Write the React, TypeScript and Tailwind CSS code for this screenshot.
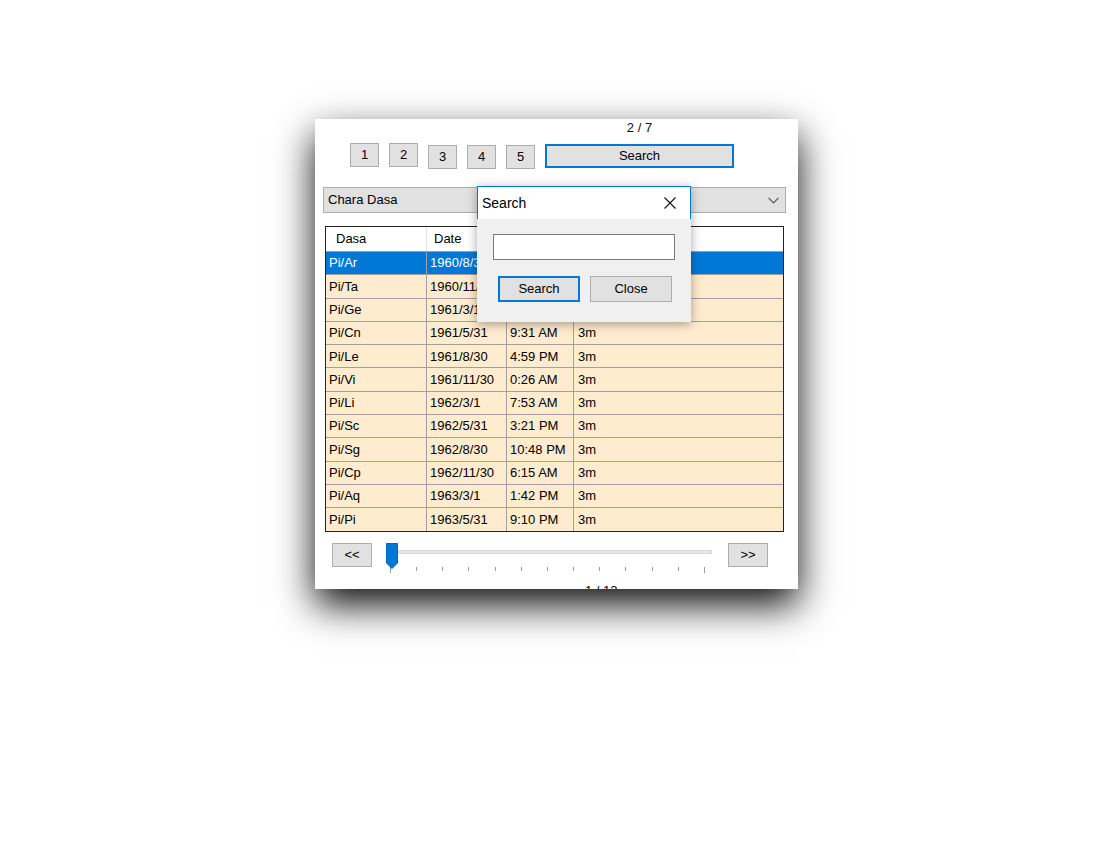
import React from 'react';

type Row = {
  dasa: string;
  date: string;
  time: string;
  len: string;
};

const ROWS: Row[] = [
  { dasa: 'Pi/Ar', date: '1960/8/31', time: '11:10 AM', len: '3m' },
  { dasa: 'Pi/Ta', date: '1960/11/30', time: '6:37 PM', len: '3m' },
  { dasa: 'Pi/Ge', date: '1961/3/1', time: '2:04 AM', len: '3m' },
  { dasa: 'Pi/Cn', date: '1961/5/31', time: '9:31 AM', len: '3m' },
  { dasa: 'Pi/Le', date: '1961/8/30', time: '4:59 PM', len: '3m' },
  { dasa: 'Pi/Vi', date: '1961/11/30', time: '0:26 AM', len: '3m' },
  { dasa: 'Pi/Li', date: '1962/3/1', time: '7:53 AM', len: '3m' },
  { dasa: 'Pi/Sc', date: '1962/5/31', time: '3:21 PM', len: '3m' },
  { dasa: 'Pi/Sg', date: '1962/8/30', time: '10:48 PM', len: '3m' },
  { dasa: 'Pi/Cp', date: '1962/11/30', time: '6:15 AM', len: '3m' },
  { dasa: 'Pi/Aq', date: '1963/3/1', time: '1:42 PM', len: '3m' },
  { dasa: 'Pi/Pi', date: '1963/5/31', time: '9:10 PM', len: '3m' },
];

const PAGES = ['1', '2', '3', '4', '5'];
const TICKS = 13;

function PageButton({ label, offset }: { label: string; offset: boolean }) {
  return (
    <button
      className={`flex h-[24px] w-[29px] items-center justify-center border border-[#adadad] bg-[#e1e1e1] text-[13px] text-black ${
        offset ? 'mt-[26px]' : 'mt-[24px]'
      }`}
    >
      {label}
    </button>
  );
}

function SearchDialog() {
  return (
    <div className="absolute left-[162px] top-[67px] flex h-[136px] w-[214px] flex-col shadow-[0_2px_10px_rgba(0,0,0,0.35)]">
      {/* title bar */}
      <div className="flex h-[33px] items-center justify-between border-x border-t border-[#0078d7] bg-white pl-[4px] pr-[14px]">
        <span className="text-[14px] text-black">Search</span>
        <svg width="12" height="12" viewBox="0 0 12 12">
          <path d="M0.5 0.5 L11.5 11.5 M11.5 0.5 L0.5 11.5" stroke="#111" strokeWidth="1.1" fill="none" />
        </svg>
      </div>
      {/* body */}
      <div className="flex flex-1 flex-col bg-[#f0f0f0] pl-[16px] pt-[15px]">
        <div className="h-[26px] w-[182px] border border-[#7a7a7a] bg-white" />
        <div className="mt-[16px] flex gap-[10px] pl-[5px]">
          <button className="flex h-[26px] w-[82px] items-center justify-center border-2 border-[#0078d7] bg-[#e1e1e1] text-[13px] text-black">
            Search
          </button>
          <button className="flex h-[26px] w-[82px] items-center justify-center border border-[#adadad] bg-[#e1e1e1] text-[13px] text-black">
            Close
          </button>
        </div>
      </div>
    </div>
  );
}

function DasaTable() {
  return (
    <div className="ml-[10px] mt-[13px] h-[306px] w-[459px] overflow-hidden border border-[#222] bg-white">
      {/* header */}
      <div className="grid h-[25px] grid-cols-[101px_80px_67px_1fr] border-b border-[#a0a0a0] bg-white text-[13px] text-black">
        <div className="flex items-center border-r border-[#e5e5e5] pl-[10px]">Dasa</div>
        <div className="flex items-center border-r border-[#e5e5e5] pl-[7px]">Date</div>
        <div className="flex items-center border-r border-[#e5e5e5] pl-[7px]">Time</div>
        <div className="flex items-center pl-[7px]">Length</div>
      </div>
      {ROWS.map((r, i) => {
        const selected = i === 0;
        return (
          <div
            key={r.dasa}
            className={`grid h-[23.3px] grid-cols-[101px_80px_67px_1fr] border-b border-[#a0a0a0] text-[13px] ${
              selected ? 'bg-[#0078d7] text-white' : 'bg-[#ffebcd] text-black'
            }`}
          >
            <div className="flex items-center border-r border-[#a0a0a0] pl-[3px]">{r.dasa}</div>
            <div className="flex items-center border-r border-[#a0a0a0] pl-[3px]">{r.date}</div>
            <div className="flex items-center border-r border-[#a0a0a0] pl-[3px]">{r.time}</div>
            <div className="flex items-center pl-[4px]">{r.len}</div>
          </div>
        );
      })}
    </div>
  );
}

function Slider() {
  return (
    <div className="mt-[11px] flex h-[30px] items-start">
      <button className="ml-[17px] flex h-[24px] w-[40px] items-center justify-center border border-[#adadad] bg-[#e1e1e1] text-[13px] text-black">
        &lt;&lt;
      </button>
      <div className="relative ml-[14px] h-[30px] w-[326px]">
        {/* track */}
        <div className="absolute left-[2px] right-0 top-[7px] h-[4px] border border-[#d6d6d6] bg-[#e7e7e7]" />
        {/* ticks */}
        <div className="absolute left-[4px] top-[24px] flex w-[315px] justify-between">
          {Array.from({ length: TICKS }).map((_, i) => (
            <div
              key={i}
              className={`w-px bg-[#9a9a9a] ${i === 0 || i === TICKS - 1 ? 'h-[6px]' : 'h-[4px]'}`}
            />
          ))}
        </div>
        {/* thumb */}
        <svg className="absolute left-0 top-0" width="12" height="26" viewBox="0 0 12 26">
          <path d="M0.5 0.5 H11.5 V20 L6 25.5 L0.5 20 Z" fill="#0078d7" stroke="#0064b8" strokeWidth="1" />
        </svg>
      </div>
      <button className="ml-[16px] flex h-[24px] w-[40px] items-center justify-center border border-[#adadad] bg-[#e1e1e1] text-[13px] text-black">
        &gt;&gt;
      </button>
    </div>
  );
}

export default function App() {
  return (
    <div
      className="h-[856px] w-[1112px] bg-white pl-[315px] pt-[119px]"
      style={{ fontFamily: '"Liberation Sans", Arial, sans-serif' }}
    >
      <div className="relative h-[470px] w-[483px] bg-white shadow-[0_16px_36px_rgba(0,0,0,0.95)]">
        <div className="h-full w-full overflow-hidden">
          {/* top: page buttons + search */}
          <div className="flex gap-[10px] pl-[35px]">
            {PAGES.map((p, i) => (
              <PageButton key={p} label={p} offset={i >= 2} />
            ))}
            <div className="flex flex-col items-center">
              <div className="h-[25px] pt-[1px] text-[13px] leading-[16px] text-[#111]">2 / 7</div>
              <button className="flex h-[24px] w-[189px] items-center justify-center border-2 border-[#0078d7] bg-[#e1e1e1] text-[13px] text-black">
                Search
              </button>
            </div>
          </div>

          {/* dasa selector */}
          <div className="ml-[8px] mt-[18px] flex h-[26px] w-[463px] items-center justify-between border border-[#adadad] bg-[#e1e1e1] pl-[4px] pr-[6px] text-[13px] text-black">
            <span>Chara Dasa</span>
            <svg width="11" height="7" viewBox="0 0 11 7">
              <path d="M0.5 0.8 L5.5 5.8 L10.5 0.8" stroke="#555" strokeWidth="1.2" fill="none" />
            </svg>
          </div>

          <DasaTable />
          <Slider />

          <div className="ml-[270px] mt-[10px] text-[13px] leading-[16px] text-black">1 / 12</div>
        </div>

        <SearchDialog />
      </div>
    </div>
  );
}
